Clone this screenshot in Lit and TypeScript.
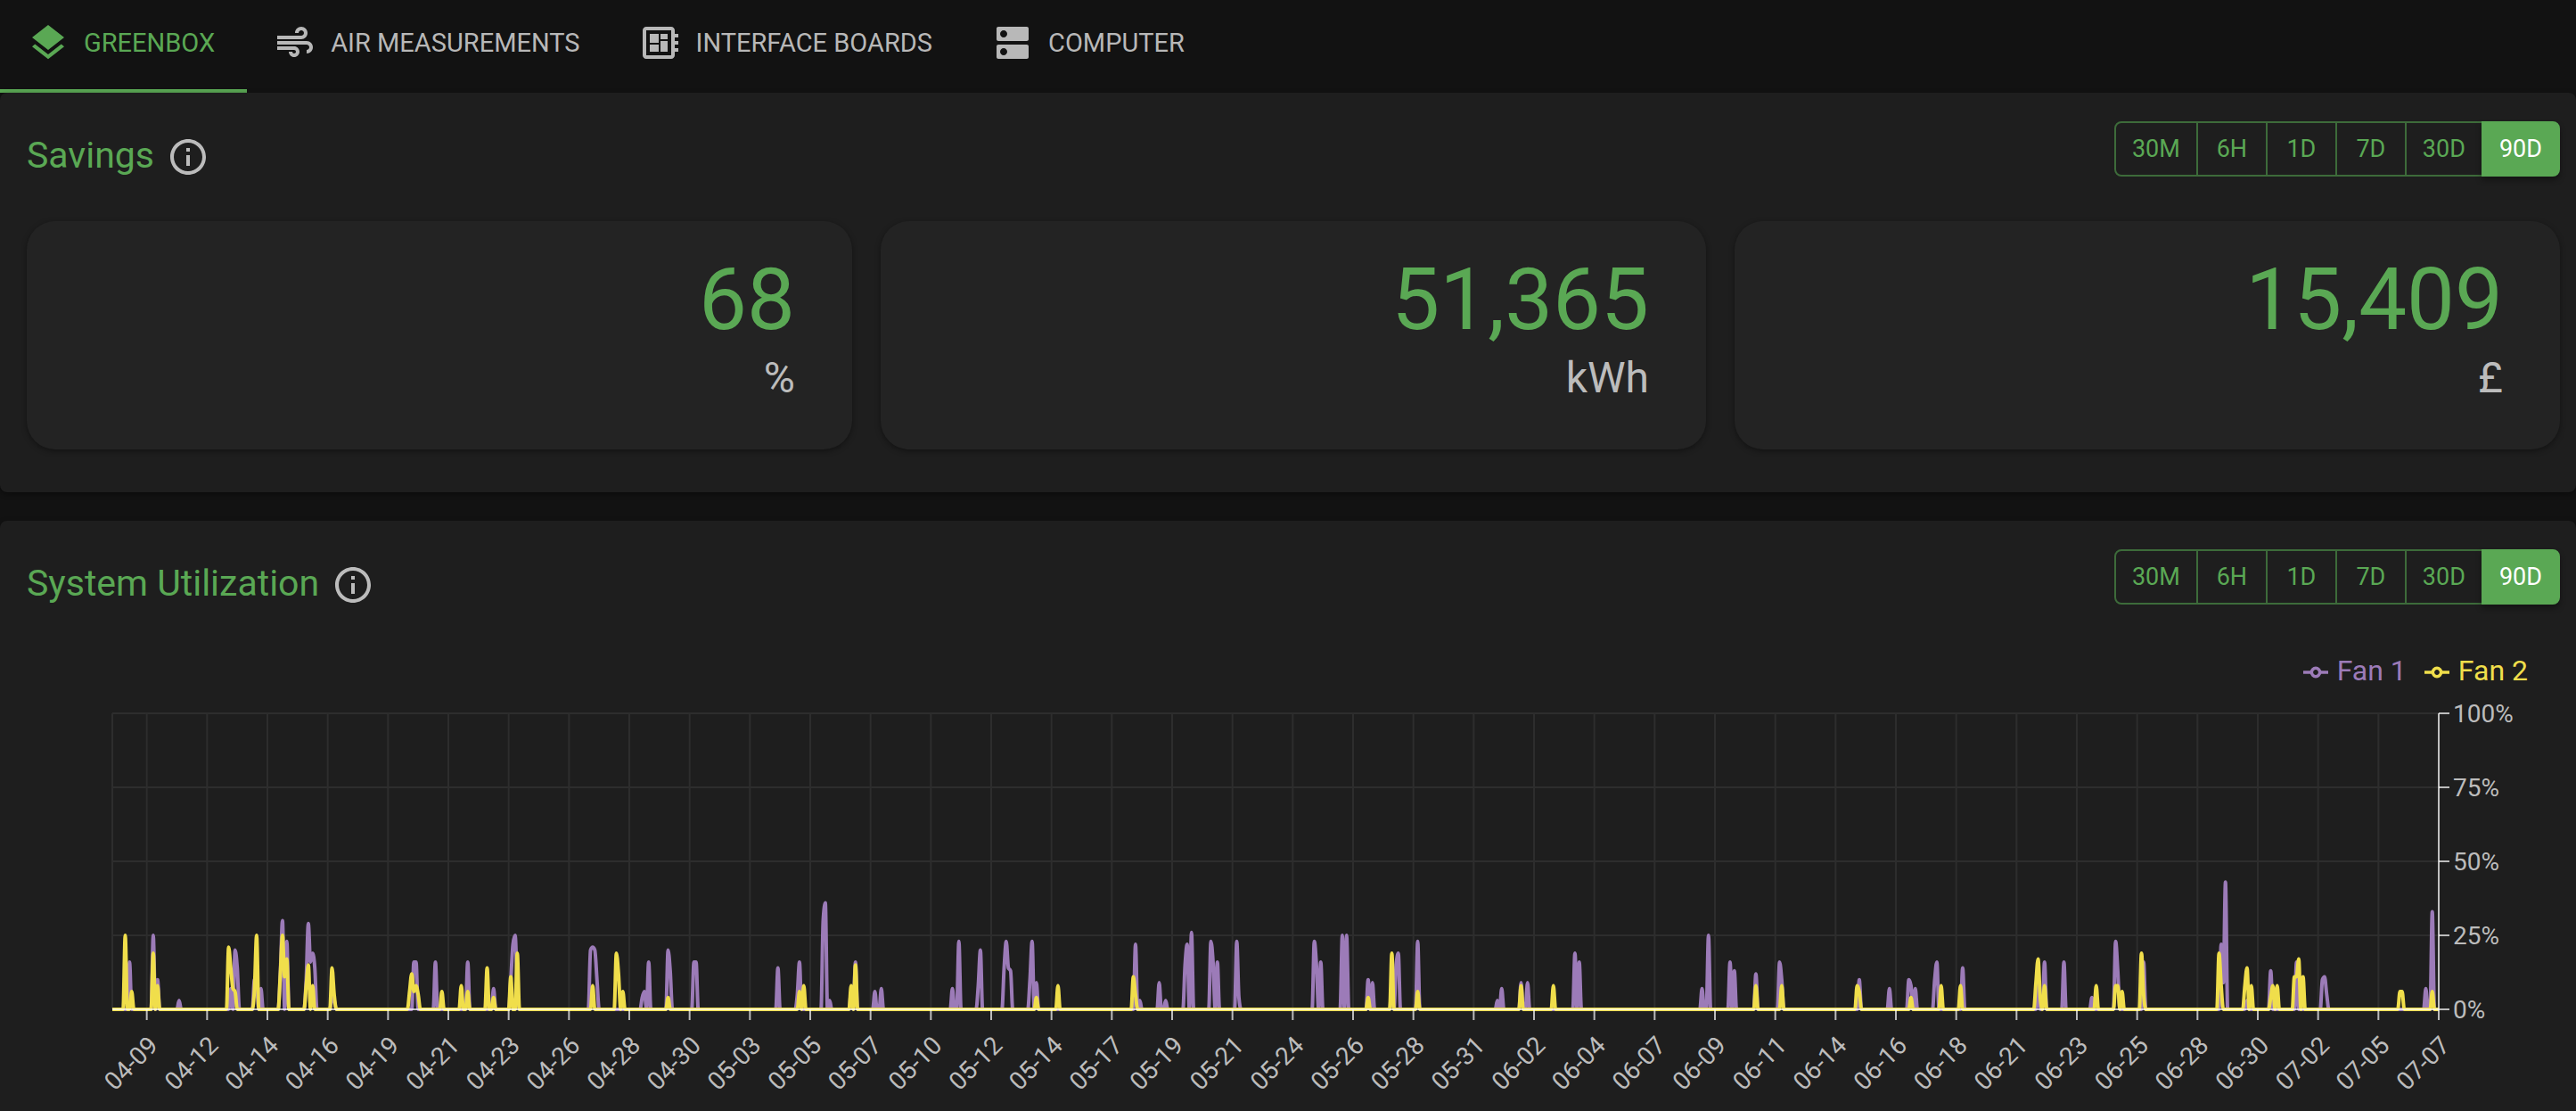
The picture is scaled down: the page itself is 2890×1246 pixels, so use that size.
import { LitElement, html, svg, css } from "lit";
import { customElement, property, state } from "lit/decorators.js";
import { classMap } from "lit/directives/class-map.js";

const ICONS = {
  layers:
    "M11.99 18.54l-7.37-5.73L3 14.07l9 7 9-7-1.63-1.27-7.38 5.74zM12 16l7.36-5.73L21 9l-9-7-9 7 1.63 1.27L12 16z",
  air: "M14.5 17c0 1.65-1.35 3-3 3s-3-1.35-3-3h2c0 .55.45 1 1 1s1-.45 1-1-.45-1-1-1H2v-2h9.5c1.65 0 3 1.35 3 3zM19 6.5C19 4.57 17.43 3 15.5 3S12 4.57 12 6.5h2c0-.83.67-1.5 1.5-1.5s1.5.67 1.5 1.5S16.33 8 15.5 8H2v2h13.5c1.93 0 3.5-1.57 3.5-3.5zm-.5 4.5H2v2h16.5c.83 0 1.5.67 1.5 1.5s-.67 1.5-1.5 1.5v2c1.93 0 3.5-1.57 3.5-3.5S20.43 11 18.5 11z",
  board:
    "M22 9V7h-2V5c0-1.1-.9-2-2-2H4c-1.1 0-2 .9-2 2v14c0 1.1.9 2 2 2h14c1.1 0 2-.9 2-2v-2h2v-2h-2v-2h2v-2h-2V9h2zm-4 10H4V5h14v14zM6 13h5v4H6zm6-6h4v3h-4zM6 7h5v5H6zm6 4h4v6h-4z",
  dns: "M20 13H4c-.55 0-1 .45-1 1v6c0 .55.45 1 1 1h16c.55 0 1-.45 1-1v-6c0-.55-.45-1-1-1zM7 19c-1.1 0-2-.9-2-2s.9-2 2-2 2 .9 2 2-.9 2-2 2zM20 3H4c-.55 0-1 .45-1 1v6c0 .55.45 1 1 1h16c.55 0 1-.45 1-1V4c0-.55-.45-1-1-1zM7 9c-1.1 0-2-.9-2-2s.9-2 2-2 2 .9 2 2-.9 2-2 2z",
  info: "M11 7h2v2h-2zm0 4h2v6h-2zm1-9C6.48 2 2 6.48 2 12s4.48 10 10 10 10-4.48 10-10S17.52 2 12 2zm0 18c-4.41 0-8-3.59-8-8s3.59-8 8-8 8 3.59 8 8-3.59 8-8 8z",
};

const icon = (path: string) => html`
  <svg class="icon" viewBox="0 0 24 24" aria-hidden="true"><path d=${path}></path></svg>
`;

const RANGES = ["30M", "6H", "1D", "7D", "30D", "90D"];

// One sample every two hours over 90 days; every sample not listed is zero.
const SAMPLE_COUNT = 1081;
const TICK_STEP = 28;
const FIRST_TICK = 16;

type Samples = Record<number, number>;

const FAN_1: Samples = {
  8: 16, 19: 25, 21: 10, 31: 3, 55: 7, 57: 20, 58: 14, 66: 10, 67: 8, 69: 7,
  78: 12, 79: 30, 81: 23, 90: 10, 91: 29, 92: 16, 93: 19, 94: 14, 102: 4, 103: 3,
  140: 16, 141: 16, 150: 16, 165: 16, 177: 7, 185: 10, 186: 22, 187: 25, 188: 8,
  222: 20, 223: 21, 224: 20, 225: 10, 246: 4, 247: 6, 249: 16, 258: 20, 259: 13,
  270: 16, 271: 16, 309: 14, 318: 5, 319: 16, 330: 30, 331: 36, 333: 3, 343: 6, 345: 16,
  354: 6, 357: 7, 390: 7, 393: 23, 402: 8, 403: 20, 414: 14, 415: 23, 416: 14, 417: 13,
  426: 10, 427: 23, 429: 9, 475: 22, 477: 3, 486: 9, 489: 3, 498: 15, 499: 22, 501: 26,
  510: 23, 511: 16, 513: 16, 522: 23, 523: 4, 558: 23, 559: 15, 561: 16, 571: 25, 573: 25,
  583: 10, 585: 9, 594: 8, 596: 15, 597: 19, 606: 23, 643: 3, 645: 7, 654: 9, 657: 9,
  679: 19, 681: 16, 738: 7, 741: 25, 751: 16, 753: 13, 763: 12, 774: 16, 775: 10,
  811: 10, 825: 7, 834: 10, 835: 8, 837: 7, 846: 10, 847: 16, 859: 14, 894: 9, 897: 16,
  906: 16, 919: 4, 930: 23, 931: 13, 943: 16, 979: 22, 980: 9, 981: 43, 991: 3,
  1002: 13, 1014: 16, 1026: 10, 1027: 11, 1028: 5, 1074: 7, 1077: 33,
};

const FAN_2: Samples = {
  6: 25, 9: 6, 19: 19, 21: 8, 54: 21, 55: 14, 56: 7, 57: 6, 67: 25, 66: 7, 78: 12, 79: 25,
  80: 11, 81: 17, 90: 8, 91: 15, 93: 8, 102: 14, 103: 5, 138: 6, 139: 12, 140: 6, 141: 8,
  142: 5, 153: 6, 162: 8, 165: 6, 174: 14, 177: 4, 185: 11, 188: 19, 223: 8, 234: 19, 235: 12,
  237: 6, 258: 4, 319: 6, 321: 8, 343: 8, 345: 15, 429: 4, 439: 8, 474: 11, 475: 5,
  583: 4, 594: 19, 606: 6, 654: 8, 669: 8, 763: 8, 775: 8, 810: 8, 811: 6, 835: 4,
  849: 8, 858: 8, 893: 9, 894: 17, 895: 4, 897: 8, 921: 8, 930: 8, 931: 8, 933: 6,
  942: 19, 943: 5, 978: 19, 979: 8, 990: 8, 991: 14, 993: 8, 1002: 4, 1003: 8, 1005: 8,
  1013: 11, 1014: 11, 1015: 17, 1017: 11, 1062: 6, 1063: 6, 1077: 6,
};

const SERIES = [
  { name: "Fan 1", key: "fan-1", data: FAN_1 },
  { name: "Fan 2", key: "fan-2", data: FAN_2 },
];

const DATES = [
  "04-09", "04-12", "04-14", "04-16", "04-19", "04-21", "04-23", "04-26", "04-28", "04-30",
  "05-03", "05-05", "05-07", "05-10", "05-12", "05-14", "05-17", "05-19", "05-21", "05-24",
  "05-26", "05-28", "05-31", "06-02", "06-04", "06-07", "06-09", "06-11", "06-14", "06-16",
  "06-18", "06-21", "06-23", "06-25", "06-28", "06-30", "07-02", "07-05", "07-07",
];

const LEVELS = [0, 25, 50, 75, 100];

/** Cubic path through evenly spaced samples that never overshoots them. */
function monotonePath(values: number[], left: number, step: number, toY: (v: number) => number) {
  const ys = values.map(toY);
  const n = ys.length;
  const slope = (i: number) => (ys[i + 1] - ys[i]) / step;
  const tangents = ys.map((_, i) => {
    if (i === 0 || i === n - 1) return 0;
    const a = slope(i - 1);
    const b = slope(i);
    if (a * b <= 0) return 0;
    return Math.sign(a) * Math.min(2 * Math.abs(a), 2 * Math.abs(b), Math.abs(a + b) / 2);
  });
  const f = (v: number) => v.toFixed(2);
  const third = step / 3;
  let d = `M${f(left)},${f(ys[0])}`;
  for (let i = 1; i < n; i++) {
    const x = left + i * step;
    if (ys[i] === ys[i - 1]) {
      d += `H${f(x)}`;
      continue;
    }
    d += `C${f(x - step + third)},${f(ys[i - 1] + tangents[i - 1] * third)},${f(x - third)},${f(
      ys[i] - tangents[i] * third
    )},${f(x)},${f(ys[i])}`;
  }
  return d;
}

@customElement("range-picker")
export class RangePicker extends LitElement {
  @property() label = "";
  @state() private selected = "90D";

  static styles = css`
    .group {
      display: flex;
    }
    .range {
      box-sizing: border-box;
      min-width: 80px;
      height: 62px;
      margin: 0 0 0 -2px;
      padding: 0 18px;
      border: 2px solid #3d6b3a;
      background: transparent;
      color: #5aa854;
      font: 400 27px/40px Roboto, sans-serif;
      cursor: pointer;
    }
    .range:first-child {
      margin-left: 0;
      border-radius: 8px 0 0 8px;
    }
    .range:last-child {
      border-radius: 0 8px 8px 0;
    }
    .selected {
      border-color: #5aa854;
      background: #5aa854;
      color: #fff;
      box-shadow: 0 4px 6px rgba(0, 0, 0, 0.35);
    }
  `;

  render() {
    return html`
      <div class="group" role="group" aria-label=${this.label}>
        ${RANGES.map(
          (range) => html`<button
            type="button"
            class=${classMap({ range: true, selected: range === this.selected })}
            aria-pressed=${range === this.selected}
            @click=${() => (this.selected = range)}
          >${range}</button>`
        )}
      </div>
    `;
  }
}

@customElement("stat-card")
export class StatCard extends LitElement {
  @property() value = "";
  @property() unit = "";

  static styles = css`
    :host {
      display: block;
      padding: 32px 64px 48px;
      border-radius: 32px;
      background: #232323;
      box-shadow: 0 2px 6px rgba(0, 0, 0, 0.4);
      text-align: right;
    }
    .value {
      color: #5aa854;
      font-size: 96px;
      line-height: 112px;
    }
    .unit {
      color: #bcbcbc;
      font-size: 48px;
      line-height: 64px;
    }
  `;

  render() {
    return html`
      <div class="value">${this.value}</div>
      <div class="unit">${this.unit}</div>
    `;
  }
}

@customElement("utilization-chart")
export class UtilizationChart extends LitElement {
  @state() private width = 2890;
  private observer?: ResizeObserver;

  static styles = css`
    :host {
      display: block;
    }
    .legend {
      display: flex;
      justify-content: flex-end;
      gap: 20px;
      margin: 0;
      padding: 0 54px 0 0;
      list-style: none;
      font-size: 32px;
      line-height: 48px;
    }
    .entry {
      display: flex;
      align-items: center;
      gap: 10px;
    }
    .marker {
      width: 28px;
      height: 28px;
      padding-top: 4px;
      fill: none;
      stroke: currentColor;
      stroke-width: 4;
    }
    .plot {
      display: block;
      width: 100%;
      height: 470px;
      font-size: 28px;
    }
    .fan-1 {
      color: #9c7bb8;
    }
    .fan-2 {
      color: #f0de4b;
    }
    .grid {
      stroke: #2d2d2d;
      stroke-width: 2;
    }
    .line {
      fill: none;
      stroke: currentColor;
      stroke-width: 4;
    }
    .axis {
      stroke: rgba(255, 255, 255, 0.7);
      stroke-width: 2;
    }
    .tick {
      fill: #bcbcbc;
    }
    .date {
      text-anchor: end;
    }
  `;

  connectedCallback() {
    super.connectedCallback();
    this.observer = new ResizeObserver(() => this.measure());
    this.observer.observe(this);
  }

  disconnectedCallback() {
    this.observer?.disconnect();
    super.disconnectedCallback();
  }

  private measure() {
    const width = this.clientWidth;
    if (width > 0) this.width = width;
  }

  render() {
    const left = 126;
    const right = this.width - 154;
    const top = 24;
    const bottom = 356;
    const step = (right - left) / (SAMPLE_COUNT - 1);
    const toY = (v: number) => bottom - (v / 100) * (bottom - top);
    const ticks = DATES.map((date, i) => ({ date, x: left + (FIRST_TICK + i * TICK_STEP) * step }));

    return html`
      <ul class="legend">
        ${SERIES.map(
          (s) => html`<li class="entry ${s.key}">
            <svg class="marker" viewBox="0 0 32 32" aria-hidden="true">
              <path
                d="M0,16h10.67A5.33,5.33,0,1,1,21.33,16H32M21.33,16A5.33,5.33,0,1,1,10.67,16"
              ></path></svg
            ><span>${s.name}</span>
          </li>`
        )}
      </ul>
      <svg class="plot" role="img" aria-label="System utilization by fan">
        <g class="grid">
          ${LEVELS.map(
            (v) => svg`<line x1=${left} x2=${right} y1=${toY(v)} y2=${toY(v)}></line>`
          )}
          <line x1=${left} x2=${left} y1=${top} y2=${bottom}></line>
          ${ticks.map((t) => svg`<line x1=${t.x} x2=${t.x} y1=${top} y2=${bottom}></line>`)}
        </g>
        ${SERIES.map((s) => {
          const values = Array.from({ length: SAMPLE_COUNT }, (_, i) => s.data[i] ?? 0);
          return svg`<path class="line ${s.key}" d=${monotonePath(values, left, step, toY)}></path>`;
        })}
        <g class="axis">
          <line x1=${left} x2=${right} y1=${bottom} y2=${bottom}></line>
          ${ticks.map(
            (t) => svg`<line x1=${t.x} x2=${t.x} y1=${bottom} y2=${bottom + 12}></line>`
          )}
          <line x1=${right} x2=${right} y1=${top} y2=${bottom}></line>
          ${LEVELS.map(
            (v) => svg`<line x1=${right} x2=${right + 12} y1=${toY(v)} y2=${toY(v)}></line>`
          )}
        </g>
        ${LEVELS.map(
          (v) => svg`<text class="tick" x=${right + 16} y=${toY(v) + 10}>${v}%</text>`
        )}
        ${ticks.map(
          (t) => svg`<text
            class="tick date"
            transform="translate(${t.x} ${bottom + 28}) rotate(-45)"
            y="20"
          >${t.date}</text>`
        )}
      </svg>
    `;
  }
}

@customElement("app-root")
export class AppRoot extends LitElement {
  @state() private tab = "Greenbox";

  static styles = css`
    :host {
      display: block;
      min-height: 100vh;
      background: #121212;
      font-family: Roboto, sans-serif;
    }
    .tabs {
      display: flex;
    }
    .tab {
      display: flex;
      align-items: center;
      gap: 16px;
      padding: 24px 36px 28px 30px;
      border: 0;
      border-bottom: 4px solid transparent;
      background: transparent;
      color: #b8b8b8;
      font: 400 29px/48px Roboto, sans-serif;
      text-transform: uppercase;
      white-space: nowrap;
      cursor: pointer;
    }
    .active {
      border-color: #5aa854;
      color: #5aa854;
    }
    .icon {
      flex: none;
      display: block;
      width: 48px;
      height: 48px;
      fill: currentColor;
    }
    .panels {
      display: grid;
      gap: 32px;
    }
    .panel {
      padding-top: 32px;
      border-radius: 8px;
      background: #1e1e1e;
      box-shadow: 0 2px 6px rgba(0, 0, 0, 0.4);
    }
    .panel:last-child {
      border-radius: 8px 8px 0 0;
    }
    .header {
      display: flex;
      align-items: flex-start;
      justify-content: space-between;
      padding: 0 18px 48px 30px;
    }
    .heading {
      display: flex;
      gap: 14px;
      padding-top: 16px;
    }
    .title {
      margin: 0;
      color: #5aa854;
      font-size: 41px;
      font-weight: 400;
      line-height: 44px;
    }
    .info {
      padding: 0;
      border: 0;
      background: transparent;
      color: #bcbcbc;
      cursor: pointer;
    }
    .cards {
      display: grid;
      grid-template-columns: repeat(3, 1fr);
      gap: 32px;
      padding: 0 18px 48px 30px;
    }
  `;

  private tabs = [
    { name: "Greenbox", path: ICONS.layers },
    { name: "Air Measurements", path: ICONS.air },
    { name: "Interface Boards", path: ICONS.board },
    { name: "Computer", path: ICONS.dns },
  ];

  private header(title: string) {
    return html`
      <header class="header">
        <div class="heading">
          <h2 class="title">${title}</h2>
          <button type="button" class="info" aria-label="About ${title}">${icon(ICONS.info)}</button>
        </div>
        <range-picker label="${title} range"></range-picker>
      </header>
    `;
  }

  render() {
    return html`
      <nav class="tabs" role="tablist">
        ${this.tabs.map(
          (t) => html`<button
            type="button"
            role="tab"
            class=${classMap({ tab: true, active: t.name === this.tab })}
            aria-selected=${t.name === this.tab}
            @click=${() => (this.tab = t.name)}
          >${icon(t.path)}<span>${t.name}</span></button>`
        )}
      </nav>
      <main class="panels">
        <section class="panel">
          ${this.header("Savings")}
          <div class="cards">
            <stat-card value="68" unit="%"></stat-card>
            <stat-card value="51,365" unit="kWh"></stat-card>
            <stat-card value="15,409" unit="£"></stat-card>
          </div>
        </section>
        <section class="panel">
          ${this.header("System Utilization")}
          <utilization-chart></utilization-chart>
        </section>
      </main>
    `;
  }
}
